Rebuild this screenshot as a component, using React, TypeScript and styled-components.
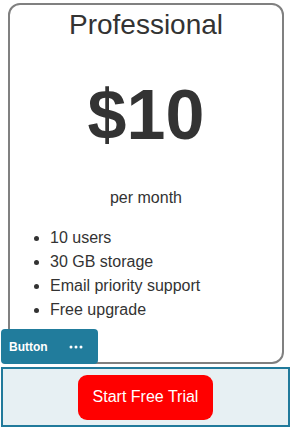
import React from "react";
import styled, { createGlobalStyle } from "styled-components";

const Global = createGlobalStyle`
  html, body { margin: 0; padding: 0; background: #ffffff; }
  body { font-family: "Liberation Sans", Arial, sans-serif; color: #333333; }
  * { box-sizing: border-box; }
`;

const Page = styled.div`
  position: relative;
  width: 292px;
  height: 427px;
  display: flex;
  flex-direction: column;
  overflow: hidden;
`;

const Card = styled.section`
  margin: 3px 8px 0 8px;
  width: 276px;
  height: 361px;
  border: 2px solid #808080;
  border-radius: 12px;
  display: flex;
  flex-direction: column;
  align-items: center;
`;

const Title = styled.h2`
  margin: 4px 0 0 0;
  font-size: 28px;
  font-weight: 400;
  line-height: 32px;
  color: #333333;
`;

const Price = styled.div`
  margin-top: 34px;
  font-size: 70px;
  font-weight: 700;
  line-height: 80px;
  color: #333333;
`;

const Period = styled.div`
  margin-top: 34px;
  font-size: 16px;
  line-height: 18px;
  color: #333333;
`;

const Features = styled.ul`
  align-self: stretch;
  margin: 19px 0 0 0;
  padding: 0 0 0 40px;
  font-size: 16px;
  line-height: 24px;
  color: #333333;
`;

const Feature = styled.li`
  padding-left: 0;
`;

const ActionBar = styled.div`
  margin: 3px 0 0 1px;
  width: 289px;
  height: 60px;
  border: 2px solid #217a9b;
  background: #e7f0f3;
  display: flex;
  align-items: center;
  justify-content: center;
`;

const TrialButton = styled.button`
  width: 135px;
  height: 45px;
  border: none;
  border-radius: 9px;
  background: #ff0000;
  color: #ffffff;
  font-family: "Liberation Sans", Arial, sans-serif;
  font-size: 16px;
  cursor: pointer;
`;

const Tag = styled.div`
  position: absolute;
  left: 1px;
  top: 329px;
  width: 97px;
  height: 35px;
  background: #217c9c;
  border-radius: 4px;
  display: flex;
  align-items: center;
  padding-left: 8px;
  gap: 21px;
  color: #ffffff;
  font-family: "Liberation Sans", Arial, sans-serif;
  font-weight: 700;
  font-size: 12px;
`;

const Dots = () => (
  <svg width="14" height="6" viewBox="0 0 14 6">
    <circle cx="2" cy="3" r="1.5" fill="#fff" />
    <circle cx="7" cy="3" r="1.5" fill="#fff" />
    <circle cx="12" cy="3" r="1.5" fill="#fff" />
  </svg>
);

export default function App() {
  return (
    <Page>
      <Global />
      <Card>
        <Title>Professional</Title>
        <Price>$10</Price>
        <Period>per month</Period>
        <Features>
          <Feature>10 users</Feature>
          <Feature>30 GB storage</Feature>
          <Feature>Email priority support</Feature>
          <Feature>Free upgrade</Feature>
        </Features>
      </Card>
      <ActionBar>
        <TrialButton>Start Free Trial</TrialButton>
      </ActionBar>
      <Tag>
        <span>Button</span>
        <Dots />
      </Tag>
    </Page>
  );
}
